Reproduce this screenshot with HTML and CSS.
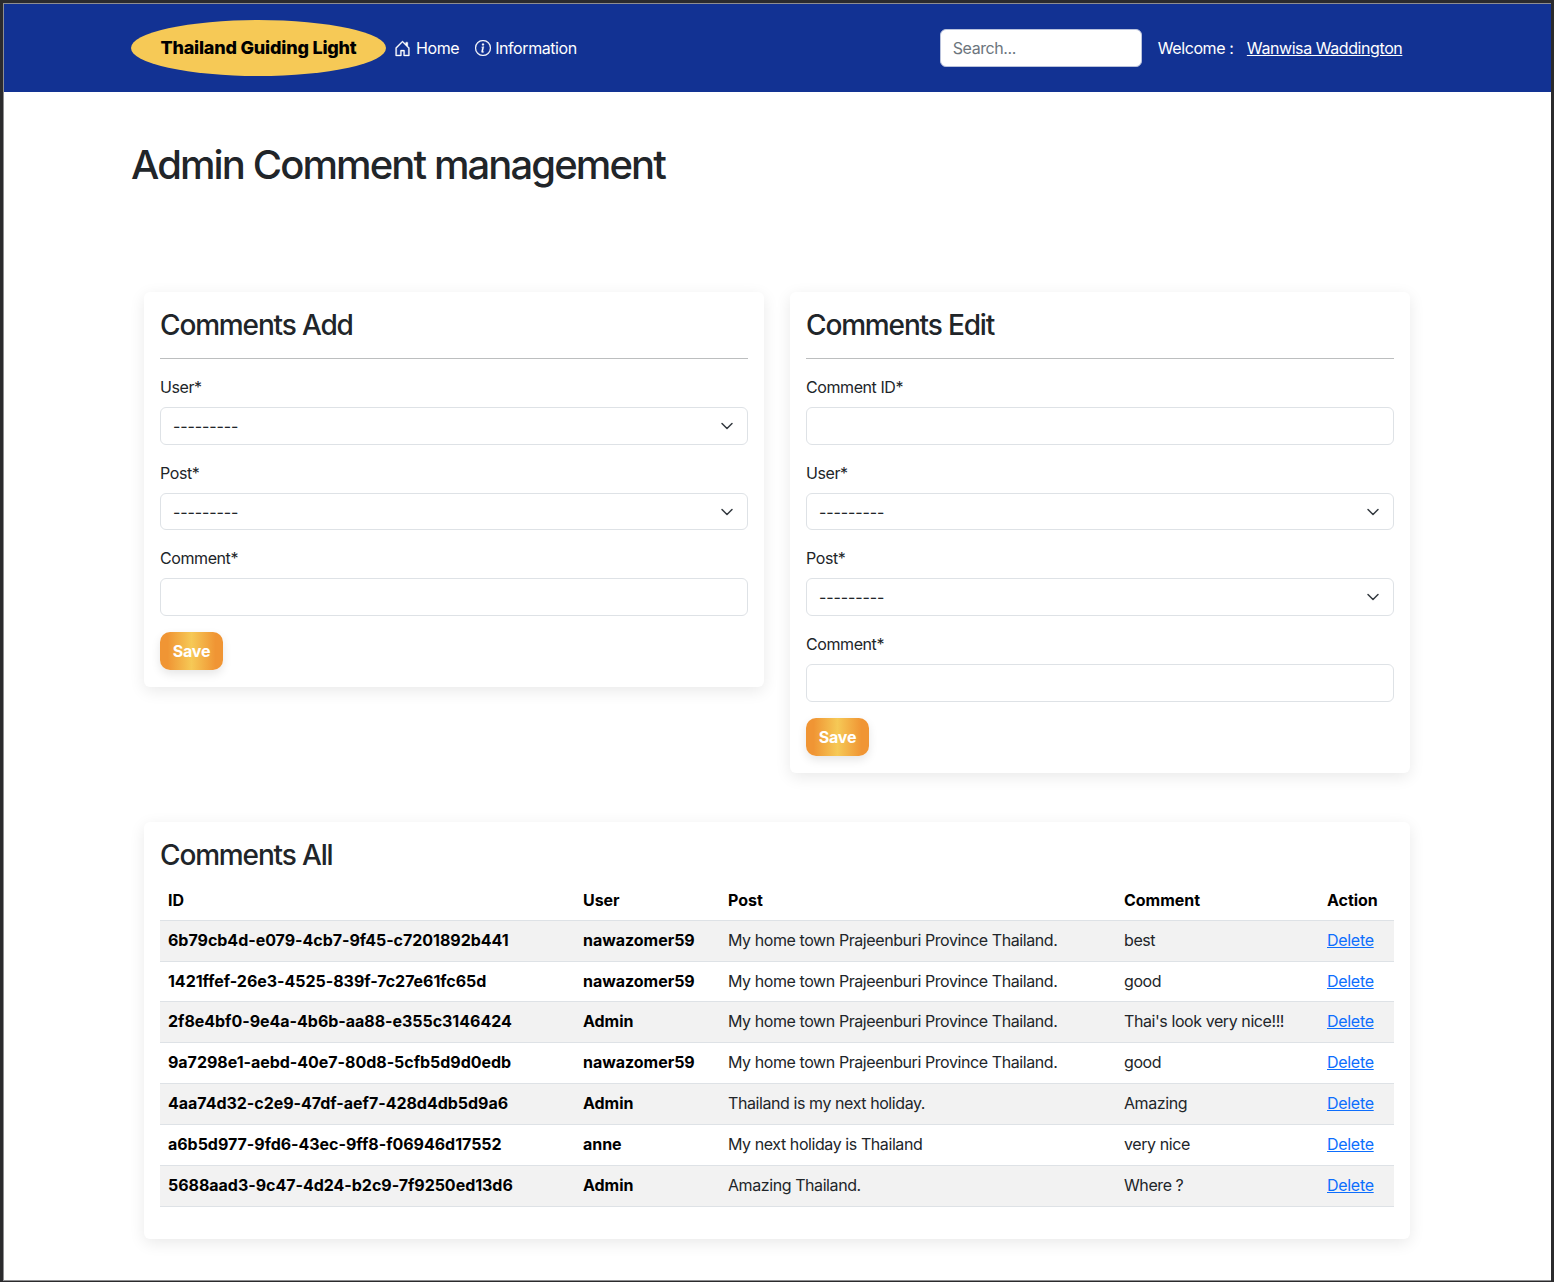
FILE: index.html
```html
<!DOCTYPE html>
<html lang="en">
<head>
<meta charset="utf-8">
<title>Admin Comment management</title>
<link rel="stylesheet" href="styles.css">
</head>
<body>
<div class="frame">
  <header class="navbar">
    <a class="brand" href="#">Thailand Guiding Light</a>
    <nav class="nav">
      <a class="nav-link nav-link-home" href="#">
        <svg class="nav-icon nav-icon-home" viewBox="0 0 16 16" fill="currentColor" stroke="currentColor" stroke-width="0.35"><path d="M8.354 1.146a.5.5 0 0 0-.708 0l-6 6A.5.5 0 0 0 1.5 7.5v7a.5.5 0 0 0 .5.5h4.5a.5.5 0 0 0 .5-.5v-4h2v4a.5.5 0 0 0 .5.5H14a.5.5 0 0 0 .5-.5v-7a.5.5 0 0 0-.146-.354L13 5.793V2.5a.5.5 0 0 0-.5-.5h-1a.5.5 0 0 0-.5.5v1.293L8.354 1.146ZM2.5 14V7.707l5.5-5.5 5.5 5.5V14H10v-4a.5.5 0 0 0-.5-.5h-3a.5.5 0 0 0-.5.5v4H2.5Z"/></svg>
        Home</a>
      <a class="nav-link" href="#">
        <svg class="nav-icon" viewBox="0 0 16 16" fill="currentColor" stroke="currentColor" stroke-width="0.3"><path d="M8 15A7 7 0 1 1 8 1a7 7 0 0 1 0 14zm0 1A8 8 0 1 0 8 0a8 8 0 0 0 0 16z"/><path d="m8.93 6.588-2.29.287-.082.38.45.083c.294.07.352.176.288.469l-.738 3.468c-.194.897.105 1.319.808 1.319.545 0 1.178-.252 1.465-.598l.088-.416c-.2.176-.492.246-.686.246-.275 0-.375-.193-.304-.533L8.93 6.588zM9 4.5a1 1 0 1 1-2 0 1 1 0 0 1 2 0z"/></svg>
        Information</a>
    </nav>
    <input class="search" type="text" placeholder="Search...">
    <span class="welcome">Welcome :</span>
    <a class="user-link" href="#">Wanwisa Waddington</a>
  </header>

  <main class="page">
    <h1 class="page-title">Admin Comment management</h1>

    <div class="forms">
      <section class="card">
        <h3 class="card-title">Comments Add</h3>
        <hr class="rule">
        <form>
          <div class="field">
            <label class="label">User*</label>
            <div class="select"><span class="dashes">---------</span><svg class="chevron" viewBox="0 0 16 16"><path d="m3 5.5 5 5 5-5"/></svg></div>
          </div>
          <div class="field">
            <label class="label">Post*</label>
            <div class="select"><span class="dashes">---------</span><svg class="chevron" viewBox="0 0 16 16"><path d="m3 5.5 5 5 5-5"/></svg></div>
          </div>
          <div class="field">
            <label class="label">Comment*</label>
            <input class="input" type="text">
          </div>
          <button class="save" type="button">Save</button>
        </form>
      </section>

      <section class="card">
        <h3 class="card-title">Comments Edit</h3>
        <hr class="rule">
        <form>
          <div class="field">
            <label class="label">Comment ID*</label>
            <input class="input" type="text">
          </div>
          <div class="field">
            <label class="label">User*</label>
            <div class="select"><span class="dashes">---------</span><svg class="chevron" viewBox="0 0 16 16"><path d="m3 5.5 5 5 5-5"/></svg></div>
          </div>
          <div class="field">
            <label class="label">Post*</label>
            <div class="select"><span class="dashes">---------</span><svg class="chevron" viewBox="0 0 16 16"><path d="m3 5.5 5 5 5-5"/></svg></div>
          </div>
          <div class="field">
            <label class="label">Comment*</label>
            <input class="input" type="text">
          </div>
          <button class="save" type="button">Save</button>
        </form>
      </section>
    </div>

    <section class="card card-wide">
      <h3 class="card-title table-title">Comments All</h3>
      <table class="table">
        <colgroup>
          <col class="col-id"><col class="col-user"><col class="col-post"><col class="col-comment"><col class="col-action">
        </colgroup>
        <thead>
          <tr><th>ID</th><th>User</th><th>Post</th><th>Comment</th><th>Action</th></tr>
        </thead>
        <tbody>
          <tr><th>6b79cb4d-e079-4cb7-9f45-c7201892b441</th><th>nawazomer59</th><td>My home town Prajeenburi Province Thailand.</td><td>best</td><td><a href="#">Delete</a></td></tr>
          <tr><th>1421ffef-26e3-4525-839f-7c27e61fc65d</th><th>nawazomer59</th><td>My home town Prajeenburi Province Thailand.</td><td>good</td><td><a href="#">Delete</a></td></tr>
          <tr><th>2f8e4bf0-9e4a-4b6b-aa88-e355c3146424</th><th>Admin</th><td>My home town Prajeenburi Province Thailand.</td><td>Thai's look very nice!!!</td><td><a href="#">Delete</a></td></tr>
          <tr><th>9a7298e1-aebd-40e7-80d8-5cfb5d9d0edb</th><th>nawazomer59</th><td>My home town Prajeenburi Province Thailand.</td><td>good</td><td><a href="#">Delete</a></td></tr>
          <tr><th>4aa74d32-c2e9-47df-aef7-428d4db5d9a6</th><th>Admin</th><td>Thailand is my next holiday.</td><td>Amazing</td><td><a href="#">Delete</a></td></tr>
          <tr><th>a6b5d977-9fd6-43ec-9ff8-f06946d17552</th><th>anne</th><td>My next holiday is Thailand</td><td>very nice</td><td><a href="#">Delete</a></td></tr>
          <tr><th>5688aad3-9c47-4d24-b2c9-7f9250ed13d6</th><th>Admin</th><td>Amazing Thailand.</td><td>Where ?</td><td><a href="#">Delete</a></td></tr>
        </tbody>
      </table>
    </section>
  </main>
</div>
</body>
</html>
```
FILE: styles.css
```css
* { box-sizing: border-box; }
html, body { margin: 0; padding: 0; }
body {
  padding: 3px 3px 1px 3px;
  font-family: Inter, "Liberation Sans", sans-serif;
  font-size: 16px;
  line-height: 24px;
  letter-spacing: -0.42px;
  color: #212529;
  background: #2b2b2d;
}
.frame {
  width: 1548px;
  height: 1278px;
  border-style: solid;
  border-color: #8e8e90;
  border-width: 1px 0 1px 1px;
  background: #fff;
  overflow: hidden;
}
.navbar {
  display: flex;
  align-items: center;
  height: 88px;
  padding: 0 0 0 127px;
  background: #123293;
  color: #fff;
}
.brand {
  display: flex;
  align-items: center;
  justify-content: center;
  width: 255px;
  height: 56px;
  border-radius: 50%;
  background: #f6c956;
  color: #000;
  font-size: 18px;
  font-weight: 800;
  letter-spacing: -0.2px;
  text-decoration: none;
}
.nav { display: flex; align-items: center; margin-left: 8px; gap: 16px; }
.nav-link {
  display: flex;
  align-items: center;
  gap: 4px;
  color: #fff;
  text-decoration: none;
}
.nav-link-home { gap: 5px; }
.nav-icon { width: 16px; height: 16px; }
.nav-icon-home { width: 17px; height: 17px; }
.search {
  width: 202px;
  height: 38px;
  margin-left: 363px;
  padding: 0 12px;
  border: 1px solid #b9c2dc;
  border-radius: 6px;
  background: #fff;
  font: inherit;
  letter-spacing: inherit;
}
.search::placeholder { color: #6c757d; opacity: 1; }
.welcome { margin-left: 16px; }
.user-link { margin-left: 13.5px; color: #fff; }
.page { padding: 0 0 0 127px; }
.page-title {
  margin: 0;
  padding-top: 49px;
  font-size: 40px;
  line-height: 48px;
  font-weight: 500;
  letter-spacing: -1.9px;
}
.forms {
  display: flex;
  align-items: flex-start;
  gap: 26px;
  margin: 103px 0 49px 13px;
}
.card {
  width: 620px;
  padding: 16px 16px 17px;
  border-radius: 6px;
  background: #fff;
  box-shadow: 0 4px 16px rgba(0, 0, 0, 0.09);
}
.card-wide { width: 1266px; margin-left: 13px; padding-bottom: 16px; }
.card-title {
  margin: 0;
  font-size: 28px;
  line-height: 35px;
  font-weight: 500;
  letter-spacing: -1.15px;
}
.table-title { margin-bottom: 7px; }
.rule {
  height: 1px;
  margin: 15px 0 16.3px;
  border: 0;
  background: #bcbebf;
}
.field { margin-bottom: 16px; }
.label { display: block; margin-bottom: 8px; }
.input, .select {
  display: block;
  width: 100%;
  height: 37.6px;
  border: 1px solid #dee2e6;
  border-radius: 6px;
  background: #fff;
  font: inherit;
}
.select {
  display: flex;
  align-items: center;
  justify-content: space-between;
  padding: 0 12px;
}
.dashes { letter-spacing: -0.1px; }
.chevron {
  width: 16px;
  height: 16px;
  fill: none;
  stroke: #343a40;
  stroke-width: 1.5;
  stroke-linecap: round;
  stroke-linejoin: round;
}
.save {
  display: block;
  width: 63px;
  height: 38px;
  padding: 0;
  border: 0;
  border-radius: 10px;
  background: linear-gradient(90deg, #f09534 0%, #f09534 12%, #f6c956 50%, #f09534 88%, #f09534 100%);
  box-shadow: 0 4px 10px rgba(0, 0, 0, 0.1);
  color: #fff;
  font: 700 16px/24px Inter, "Liberation Sans", sans-serif;
  letter-spacing: -0.2px;
}
.table {
  width: 100%;
  margin-bottom: 16px;
  border-collapse: collapse;
  table-layout: fixed;
}
.col-id { width: 415px; }
.col-user { width: 145px; }
.col-post { width: 396px; }
.col-comment { width: 203px; }
.col-action { width: 75px; }
.table th, .table td {
  padding: 8px;
  border-bottom: 1px solid #dee2e6;
  text-align: left;
  white-space: nowrap;
}
.table tbody th, .table tbody td { line-height: 23.85px; }
.table th { color: #000; font-weight: 700; letter-spacing: -0.03px; }
.table td { color: #212529; font-weight: 400; }
.table tbody tr:nth-child(odd) th, .table tbody tr:nth-child(odd) td { background: #f2f2f2; }
.table a { color: #0d6efd; letter-spacing: -0.3px; }
```
